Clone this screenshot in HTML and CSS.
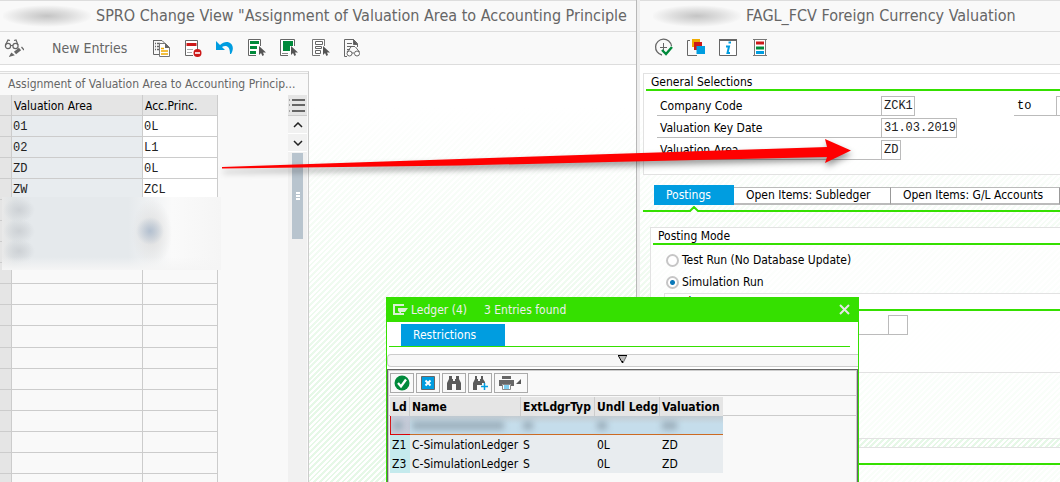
FILE: index.html
```html
<!DOCTYPE html>
<html lang="en">
<head>
<meta charset="utf-8">
<title>Foreign Currency Valuation</title>
<link rel="stylesheet" href="styles.css">
</head>
<body>
<div class="desktop">
  <main class="pane pane-left">
    <header class="titlebar"><span class="masked"></span><h1>SPRO Change View "Assignment of Valuation Area to Accounting Principle</h1></header>
    <div class="toolbar toolbar-left">
      <button class="tool" aria-label="Display or change"><svg width="20" height="20" viewBox="0 0 20 20" fill="none" stroke="#666" stroke-width="1.2"><circle cx="4" cy="8" r="2.6"/><circle cx="11.500" cy="8" r="2.600"/><path d="M7 7.500h2M1.500 7 4 2l2 .5M14 7l-2-5-2 .5"/><path d="M16 11l-5 4" stroke-width="3.500"/><path d="M6 18l1.500-2.500 2 1.500z" fill="#666"/><path d="M17.500 9l2.500 3"/></svg></button>
      <button class="tool new-entries">New Entries</button>
      <button class="tool" aria-label="Copy as"><svg width="20" height="20" viewBox="0 0 20 20" fill="none" stroke="#666"><path d="M8.500 16.500h-6v-14h7M2 2.500h9l3 3"/><path d="M4 5.500h1M4 8.500h1M4 11.500h1M6 5.500h3M6 8.500h2M6 11.500h2" stroke-width="1.500"/><path d="M8.500 5.500h6l4 4v9h-10z" fill="#fff" stroke="#777"/><path d="M14 5v5h5z" fill="#666" stroke="none"/><path d="M10 10.500h3M10 13h7M10 16h7" stroke="#f0ab00" stroke-width="1.600"/></svg></button>
      <button class="tool" aria-label="Delete"><svg width="20" height="20" viewBox="0 0 20 20" fill="none"><path d="M10 17.500H2.500v-15h12v9" fill="#fff" stroke="#666"/><path d="M3.500 5h10v3h-10z" fill="#cc1919"/><path d="M4 11.500h6M4 14.500h5" stroke="#aaa"/><circle cx="14.500" cy="15" r="4" fill="#cc1919"/><path d="M12 15h5" stroke="#fff" stroke-width="1.600"/></svg></button>
      <button class="tool" aria-label="Undo"><svg width="20" height="20" viewBox="0 0 20 20"><path d="M1 3v9h9L7 9c4-2 8-1 8 7h1c6-10-4-16-11-9z" fill="#009de0"/></svg></button>
      <button class="tool" aria-label="Select all"><svg width="20" height="20" viewBox="0 0 20 20" fill="none"><path d="M9 17.500H1.500v-16h12V8" fill="#fff" stroke="#666"/><path d="M3 3h9v3H3zM3 8h7v3H3zM3 13h6v3H3z" fill="#008a3b"/><path d="M12 8v9l2-2 1.500 3 1.500-1-1-2.500h3z" fill="#555"/></svg></button>
      <button class="tool" aria-label="Select block"><svg width="20" height="20" viewBox="0 0 20 20" fill="none"><path d="M9 17.500H1.500v-16h14V8" fill="#fff" stroke="#666"/><path d="M4 3h10v5h-3v5H4z" fill="#008a3b"/><path d="M3 15.500h6" stroke="#888"/><path d="M12 8v9l2-2 1.500 3 1.500-1-1-2.500h3z" fill="#555"/></svg></button>
      <button class="tool" aria-label="Deselect all"><svg width="20" height="20" viewBox="0 0 20 20" fill="none"><path d="M9 17.500H1.500v-16h12V8" fill="#fff" stroke="#777"/><path d="M4.500 3.500h7v3h-7zM4.500 8.500h6v2h-6zM4.500 12.500h5v3h-5z" stroke="#666"/><path d="M12 8v9l2-2 1.500 3 1.500-1-1-2.500h3z" fill="#555"/></svg></button>
      <button class="tool" aria-label="Table view"><svg width="20" height="20" viewBox="0 0 20 20" fill="none" stroke="#666"><path d="M4 18.500H1.500v-17h9l4 4V9"/><path d="M10.500 1.500v5h4z" fill="#555"/><path d="M4 5.500h5M4 8.500h8M4 11.500h3"/><circle cx="6.500" cy="15.500" r="2.500" fill="#fff"/><circle cx="14" cy="15.500" r="2.500" fill="#fff"/><path d="M9 15h2M4 14l4-5M16.500 14l-4-5"/></svg></button>
    </div>
    <div class="workspace hatch">
      <section class="list-panel">
        <h2 class="list-title">Assignment of Valuation Area to Accounting Princip...</h2>
        <div class="list-body">
          <table class="areas">
            <thead><tr><th class="sel"></th><th class="area">Valuation Area</th><th class="princ">Acc.Princ.</th></tr></thead>
            <tbody>
              <tr><td class="sel"></td><td class="key">01</td><td class="val">0L</td></tr>
              <tr><td class="sel"></td><td class="key">02</td><td class="val">L1</td></tr>
              <tr><td class="sel"></td><td class="key">ZD</td><td class="val">0L</td></tr>
              <tr><td class="sel"></td><td class="key">ZW</td><td class="val">ZCL</td></tr>
              <tr><td class="sel"></td><td class="key"></td><td></td></tr>
              <tr><td class="sel"></td><td class="key"></td><td></td></tr>
              <tr><td class="sel"></td><td class="key"></td><td></td></tr>
              <tr><td class="sel"></td><td></td><td></td></tr>
              <tr><td class="sel"></td><td></td><td></td></tr>
              <tr><td class="sel"></td><td></td><td></td></tr>
              <tr><td class="sel"></td><td></td><td></td></tr>
              <tr><td class="sel"></td><td></td><td></td></tr>
              <tr><td class="sel"></td><td></td><td></td></tr>
              <tr><td class="sel"></td><td></td><td></td></tr>
              <tr><td class="sel"></td><td></td><td></td></tr>
              <tr><td class="sel"></td><td></td><td></td></tr>
              <tr><td class="sel"></td><td></td><td></td></tr>
              <tr><td class="sel"></td><td></td><td></td></tr>
            </tbody>
          </table>
          <div class="mask-block"></div>
          <div class="scroller">
            <button class="columns" aria-label="Columns"><svg width="17" height="16" viewBox="0 0 17 16" stroke="#666" stroke-width="2"><path d="M3 3h13M3 8h13M3 14h13"/><path d="M0 3h1M0 8h1M0 14h1" stroke-width="1"/></svg></button>
            <button class="step" aria-label="Up"><svg width="10" height="6" viewBox="0 0 10 6" fill="none" stroke="#222" stroke-width="1.500"><path d="M1 5l4-4 4 4"/></svg></button>
            <button class="step" aria-label="Down"><svg width="10" height="6" viewBox="0 0 10 6" fill="none" stroke="#222" stroke-width="1.500"><path d="M1 1l4 4 4-4"/></svg></button>
            <div class="thumb"><i></i><i></i><i></i></div>
          </div>
        </div>
      </section>
    </div>
  </main>

  <section class="pane pane-right">
    <header class="titlebar titlebar-right"><span class="masked"></span><h1>FAGL_FCV Foreign Currency Valuation</h1></header>
    <div class="toolbar toolbar-right">
      <button class="tool" aria-label="Execute"><svg width="20" height="20" viewBox="0 0 20 20" fill="none"><path d="M8 17A8 8 0 1 1 17.500 8" stroke="#666" stroke-width="1.300"/><path d="M9.500 5v8M6 9.500h7" stroke="#666"/><path d="M8 12l4 4 6-7" stroke="#008a3b" stroke-width="2.400"/></svg></button>
      <button class="tool" aria-label="Get variant"><svg width="20" height="20" viewBox="0 0 20 20" fill="none"><path d="M4 2.500H1.500v15H11" stroke="#666"/><path d="M6 1h8v8H6z" fill="#f0ab00"/><path d="M8 4h8v8H8z" fill="#cc1919"/><path d="M10.500 8H19v8h-8.500z" fill="#009de0"/></svg></button>
      <button class="tool" aria-label="Information"><svg width="20" height="20" viewBox="0 0 20 20" fill="none"><path d="M1.500 2.500h17v15h-17z" fill="#fff" stroke="#666"/><path d="M1 2h18" stroke="#666" stroke-width="2"/><path d="M10.500 4.500h2.500M8 8.500h3l-1.500 6.500h2.500" stroke="#009de0" stroke-width="2"/></svg></button>
      <button class="tool" aria-label="Selection options"><svg width="20" height="20" viewBox="0 0 20 20" fill="none"><path d="M4 2h12v15H4z" fill="#fff"/><path d="M4.500 1v17M15.500 1v17M3 1.500h14M3 17.500h14" stroke="#777"/><path d="M6 3.500h8v3H6z" fill="#cc1919"/><path d="M6 8.500h8v3H6z" fill="#008a3b"/><path d="M6 13h8v3H6z" fill="#009de0"/></svg></button>
    </div>
    <form class="workspace hatch form-area">
      <section class="group general">
        <h2 class="group-title">General Selections</h2>
        <div class="fields">
          <div class="field"><label for="cc">Company Code</label><input id="cc" class="w4" value="ZCK1"><label class="to" for="cc2">to</label><input id="cc2" class="w4"></div>
          <div class="field"><label for="kd">Valuation Key Date</label><input id="kd" class="w10" value="31.03.2019"></div>
          <div class="field"><label for="va">Valuation Area</label><input id="va" class="w2" value="ZD"></div>
        </div>
      </section>
      <nav class="tabs">
        <button type="button" class="tab tab-on">Postings</button>
        <button type="button" class="tab tab-sub">Open Items: Subledger</button>
        <button type="button" class="tab tab-gl">Open Items: G/L Accounts</button>
        <svg class="notch" width="10" height="6" viewBox="0 0 10 6"><path d="M0 6l5-5 5 5z" fill="#fff"/><path d="M0 5h1l4-4 4 4h1" fill="none" stroke="#35e000" stroke-width="2"/></svg>
      </nav>
      <section class="group posting">
        <h2 class="group-title">Posting Mode</h2>
        <label class="choice"><input type="radio" name="mode">Test Run (No Database Update)</label>
        <label class="choice"><input type="radio" name="mode" checked>Simulation Run</label>
        <section class="group inner">
          <h2 class="group-title"><label for="ld">Ledger</label></h2>
          <div class="field inner-field"><span></span><input id="ld" class="w2"></div>
        </section>
      </section>
      <section class="group next"><h2 class="group-title"></h2></section>
    </form>
  </section>

  <svg class="arrow" width="660" height="50" viewBox="0 0 660 50"><path d="M12 37 400 24 617 17 615 9 641 20.500 615 33 617 27 400 32 250 35.500 12 38.500z" fill="#f00"/></svg>

  <section class="popup" role="dialog" aria-label="Ledger">
    <header class="popup-head">
      <svg width="15" height="12" viewBox="0 0 15 12" fill="none"><path d="M11 1H1v9h10" stroke="#d9efd2" stroke-width="2"/><path d="M5 4h10l-3 4H8v2L5 7z" fill="#d9efd2"/></svg>
      <span>Ledger (4)</span><span class="found">3 Entries found</span>
      <button class="close" aria-label="Close"><svg width="11" height="11" viewBox="0 0 11 11" stroke="#e6e6e6" stroke-width="2"><path d="M1 1l9 9M10 1l-9 9"/></svg></button>
    </header>
    <div class="popup-tabs"><button class="restrict">Restrictions</button></div>
    <div class="splitter"><svg width="10" height="9" viewBox="0 0 10 9"><path d="M1 1h8l-4 7z" fill="#bbb"/><path d="M0 .5h9M.5 1l4 7V6" fill="none" stroke="#000"/><path d="M8.500 1 5 8" stroke="#333" stroke-width=".6"/></svg></div>
    <div class="results">
      <div class="result-tools">
        <button aria-label="Accept"><svg width="16" height="16" viewBox="0 0 16 16"><circle cx="8" cy="8" r="7.500" fill="#008a3b"/><path d="M4 8l3 3.500L12 4.500" fill="none" stroke="#fff" stroke-width="2.300"/></svg></button>
        <button aria-label="Cancel"><svg width="16" height="16" viewBox="0 0 16 16"><path d="M1.500 1.500h13v13h-13z" fill="#009de0" stroke="#666"/><path d="M5.500 5.500l5 5M10.500 5.500l-5 5" stroke="#fff" stroke-width="2"/></svg></button>
        <button aria-label="Find"><svg width="16" height="16" viewBox="0 0 16 16" fill="#5a5a5a"><path d="M3 1h3v3h1v2h2V4h1V1h3v3l2 4v7h-5V9H6v6H1V8l2-4z"/></svg></button>
        <button aria-label="Find next"><svg width="16" height="16" viewBox="0 0 16 16" fill="#5a5a5a"><path d="M3 1h2v3h1v2h2V4h1V1h2v3l2 3v1h-3v2H5v5H1V8l2-4z"/><path d="M12.500 8v7M9 11.500h7" stroke="#009de0" stroke-width="1.500"/></svg></button>
        <button class="print" aria-label="Print"><svg width="26" height="16" viewBox="0 0 26 16"><path d="M4 1h9v3H4zM1 5h15v6h-3V9H4v2H1z" fill="#666"/><path d="M4.500 9.500h8v5h-8z" fill="#fff" stroke="#888"/><path d="M6 11h5M6 13h5" stroke="#009de0"/><path d="M23 4v5h-5z" fill="#555"/></svg></button>
      </div>
      <div class="result-grid">
        <table class="ledgers">
          <thead><tr><th class="c1">Ld</th><th class="c2">Name</th><th class="c3">ExtLdgrTyp</th><th class="c4">Undl Ledg</th><th class="c5">Valuation</th></tr></thead>
          <tbody>
            <tr class="chosen"><td><i></i></td><td><i class="long"></i></td><td><i></i></td><td><i></i></td><td><i class="mid"></i></td></tr>
            <tr><td>Z1</td><td>C-SimulationLedger</td><td>S</td><td>0L</td><td>ZD</td></tr>
            <tr><td>Z3</td><td>C-SimulationLedger</td><td>S</td><td>0L</td><td>ZD</td></tr>
          </tbody>
        </table>
      </div>
    </div>
  </section>
</div>
</body>
</html>
```
FILE: styles.css
```css
* { box-sizing: border-box; }
body { margin: 0; font: 12px/16px "DejaVu Sans Condensed", "DejaVu Sans", sans-serif; color: #000; }
button, input { font: inherit; color: inherit; margin: 0; padding: 0; border: 0; background: none; border-radius: 0; }
h1, h2 { margin: 0; font-weight: normal; font-size: inherit; white-space: nowrap; }
table { border-collapse: separate; border-spacing: 0; table-layout: fixed; }
svg { display: block; flex: none; }

.desktop { position: relative; display: grid; grid-template-columns: minmax(0, 637fr) minmax(0, 423fr); height: 100vh; overflow: hidden; background: #fff; }
.pane { display: flex; flex-direction: column; min-height: 0; overflow: hidden; }
.pane-left { border-right: 1px solid #b8b8b8; }
.pane-right { border-left: 3px solid #eee; }

.titlebar { display: flex; align-items: center; gap: 5px; flex: none; height: 32px; border-top: 1px solid #ddd; border-bottom: 1px solid #ddd; background: #f9f9f9; padding-left: 3px; }
.titlebar h1 { font-size: 16px; line-height: 24px; color: #666; }
.titlebar-right { padding-left: 13px; }
.masked { flex: none; width: 88px; height: 22px; background: radial-gradient(ellipse 46px 11px, #c4c4c4, #ddd 50%, #f9f9f9); }
.toolbar { display: flex; align-items: center; flex: none; height: 33px; border-bottom: 1px solid #ddd; background: #f9f9f9; color: #666; }
.toolbar-left { gap: 12px; padding-left: 4px; }
.toolbar-right { gap: 12px; padding-left: 14px; }
.tool { flex: none; min-width: 20px; }
.new-entries { font-size: 14px; margin: 0 12px 0 16px; }

.workspace { flex: 1; min-height: 0; overflow: hidden; }
.hatch { background: linear-gradient(#fff 10%, #fff0 80%), repeating-linear-gradient(135deg, #e6f8e7 0 2px, #fff 2px 4px); }

.list-panel { width: 309px; height: 100%; margin-top: 6px; padding-top: 1px; border-top: 1px solid #ddd; border-right: 1px solid #ccc; background: #f9f9f9; }
.list-title { height: 22px; padding: 1px 6px 0 8px; border-top: 1px solid #ddd; color: #666; line-height: 18px; overflow: hidden; }
.list-body { position: relative; display: flex; justify-content: space-between; padding-right: 1px; }
.areas { width: 218px; }
.areas th, .areas td { height: 21px; padding: 2px 0 0 1px; border-right: 1px solid #ccc; border-bottom: 1px solid #ccc; text-align: left; line-height: 16px; font-weight: normal; }
.areas th { background: #e5e5e5; padding-left: 2px; }
.areas .sel { width: 12px; background: #e5e5e5; }
.areas .area { width: 131px; }
.areas .princ { width: 75px; }
.areas td { font-family: "Liberation Mono", monospace; color: #222; }
.areas .key { background: #e8ecef; }
.areas .val { background: #fff; }
.mask-block { position: absolute; left: 2px; top: 102px; width: 219px; height: 73px; background: linear-gradient(#f5f5f500 60px, #f5f5f5), radial-gradient(circle at 148px 34px, #b3c0d0, #b3c0d000 14px), radial-gradient(ellipse 20px 34px at 150px 36px, #ddd, #ddd0), radial-gradient(ellipse 16px 12px at 17px 13px, #cdd1d5, #dde0), radial-gradient(ellipse 16px 12px at 17px 34px, #cdd1d5, #dde0), radial-gradient(ellipse 16px 12px at 17px 54px, #cdd1d5, #dde0), linear-gradient(90deg, #e9e9e9, #dfe3e5 12px, #e5e9ec 30px 126px, #fafafa 170px, #f5f5f5); }
.scroller { width: 19px; height: 400px; background: #f1f1f1; }
.columns { display: grid; place-items: center; width: 19px; height: 21px; border-bottom: 1px solid #ccc; background: #e5e5e5; }
.step { display: grid; place-items: center; width: 100%; height: 18px; border-bottom: 1px solid #fff; }
.thumb { display: flex; flex-direction: column; align-items: center; justify-content: center; gap: 1px; width: 11px; height: 86px; margin: 1px 0 0 4px; background: #b8c4ce; }
.thumb i { width: 4px; height: 2px; background: #fff; }

.form-area { padding: 8px 0 0 3px; }
.group { border: 1px solid #e2e2e2; border-right: 0; background: #ffffffc0; }
.group-title { height: 17px; margin: 0 0 0 2px; padding-left: 5px; border-bottom: 2px solid #35e000; background: #fff; line-height: 16px; }
.general { height: 102px; }
.fields { display: flex; flex-direction: column; gap: 2px; padding: 5px 0 0 13px; }
.field { display: flex; height: 20px; }
.field label { flex: none; width: 224px; padding: 2px 0 0 3px; border-bottom: 1px solid #bbb; white-space: nowrap; }
.field .to { width: 42px; margin-left: 99px; font-family: "Liberation Mono", monospace; }
.field input { flex: none; padding: 0 0 0 2px; border: 1px solid #bbb; background: #fff; font-family: "Liberation Mono", monospace; color: #222; }
.w2 { width: 20px; }
.w4 { width: 34px; }
.w10 { width: 76px; }

.tabs { position: relative; display: flex; align-items: flex-end; height: 37px; padding: 0 0 5px 11px; border-bottom: 2px solid #35e000; }
.tab { flex: none; height: 18px; border-top: 1px solid #bbb; border-bottom: 2px solid #bbb; border-right: 1px solid #999; background: #fff; text-align: left; padding-left: 12px; line-height: 15px; white-space: nowrap; }
.tab-on { width: 80px; height: 20px; border: 0; background: #009de0; color: #fff; }
.tab-sub { width: 157px; }
.tab-gl { flex: 1; }
.notch { position: absolute; left: 46px; bottom: -2px; }
.posting { height: 212px; margin: 15px 0 0 7px; }
.choice { display: flex; align-items: center; gap: 3px; height: 22px; padding-left: 15px; }
.posting > .group-title { margin-bottom: 4px; }
.choice input { appearance: none; flex: none; width: 13px; height: 13px; border: 2px solid #c6c6c6; border-radius: 50%; background: #fff; }
.choice input:checked { background: radial-gradient(circle, #0a78b8 0 2px, #fff 3px); }
.inner { height: 80px; margin-left: 13px; }
.inner-field { margin: 4px 0 0 10px; }
.inner-field span { width: 213px; border-bottom: 1px solid #bbb; }
.next { height: 50px; margin: 8px 0 0 7px; }

.arrow { position: absolute; left: 210px; top: 130px; filter: drop-shadow(1px 4px 3px #0006); pointer-events: none; }

.popup { position: absolute; left: 386px; top: 297px; width: 473px; height: 200px; display: flex; flex-direction: column; border: solid #35e000; border-width: 0 1px; background: #fff; }
.popup-head { display: flex; align-items: center; flex: none; gap: 3px; height: 25px; padding: 0 8px 0 6px; background: #35e000; color: #eee; }
.found { margin-left: 14px; }
.close { margin-left: auto; }
.popup-tabs { flex: none; display: flex; height: 25px; margin: 0 8px 0 2px; padding: 2px 0 0 12px; border-bottom: 1px solid #35e000; }
.restrict { width: 104px; padding-left: 12px; background: #009de0; color: #fff; text-align: left; }
.splitter { flex: none; display: grid; place-items: start center; height: 13px; margin-top: 7px; border: 1px solid #ccc; border-right: 0; border-radius: 4px 0 0 4px; background: #f7f7f7; }
.results { flex: 1; margin-top: 2px; border: 1px solid #666; border-bottom: 0; background: #f9f9f9; box-shadow: inset 1px 1px #ccc, inset -1px 0 #ccc; }
.result-tools { display: flex; gap: 2px; height: 26px; padding: 3px 2px 2px; border-bottom: 1px solid #ccc; }
.result-tools button { display: grid; place-items: center; width: 24px; height: 20px; border: 1px solid #aaa; background: #f9f9f9; }
.result-tools .print { width: 34px; }
.result-grid { padding-top: 1px; background: linear-gradient(#ccc, #ccc) 0 19px / 100% 1px no-repeat; }
.ledgers { width: 333px; margin-left: 2px; }
.ledgers th, .ledgers td { height: 19px; padding: 0 0 0 2px; text-align: left; line-height: 16px; white-space: nowrap; background: #e8ecef; }
.ledgers th { background: #e5e5e5; border-right: 1px solid #ccc; }
.ledgers .c1 { width: 20px; }
.ledgers .c2 { width: 111px; }
.ledgers .c3 { width: 74px; }
.ledgers .c4 { width: 65px; }
.ledgers .c5 { width: 63px; border: 0; }
.ledgers td:first-child { background: #c5eaed; }
.ledgers .chosen td { background: linear-gradient(#c3ccd2, #c5ddeb 8px); border-bottom: 1px solid #cc6a22; }
.ledgers .chosen td:first-child { background: #c8cdda; border-left: 1px solid #d00; border-bottom-color: #d00; }
.chosen i { display: block; width: 10px; height: 9px; background: #9db0bd; filter: blur(3px); }
.chosen .long { width: 92px; }
.chosen .mid { width: 15px; }
```
